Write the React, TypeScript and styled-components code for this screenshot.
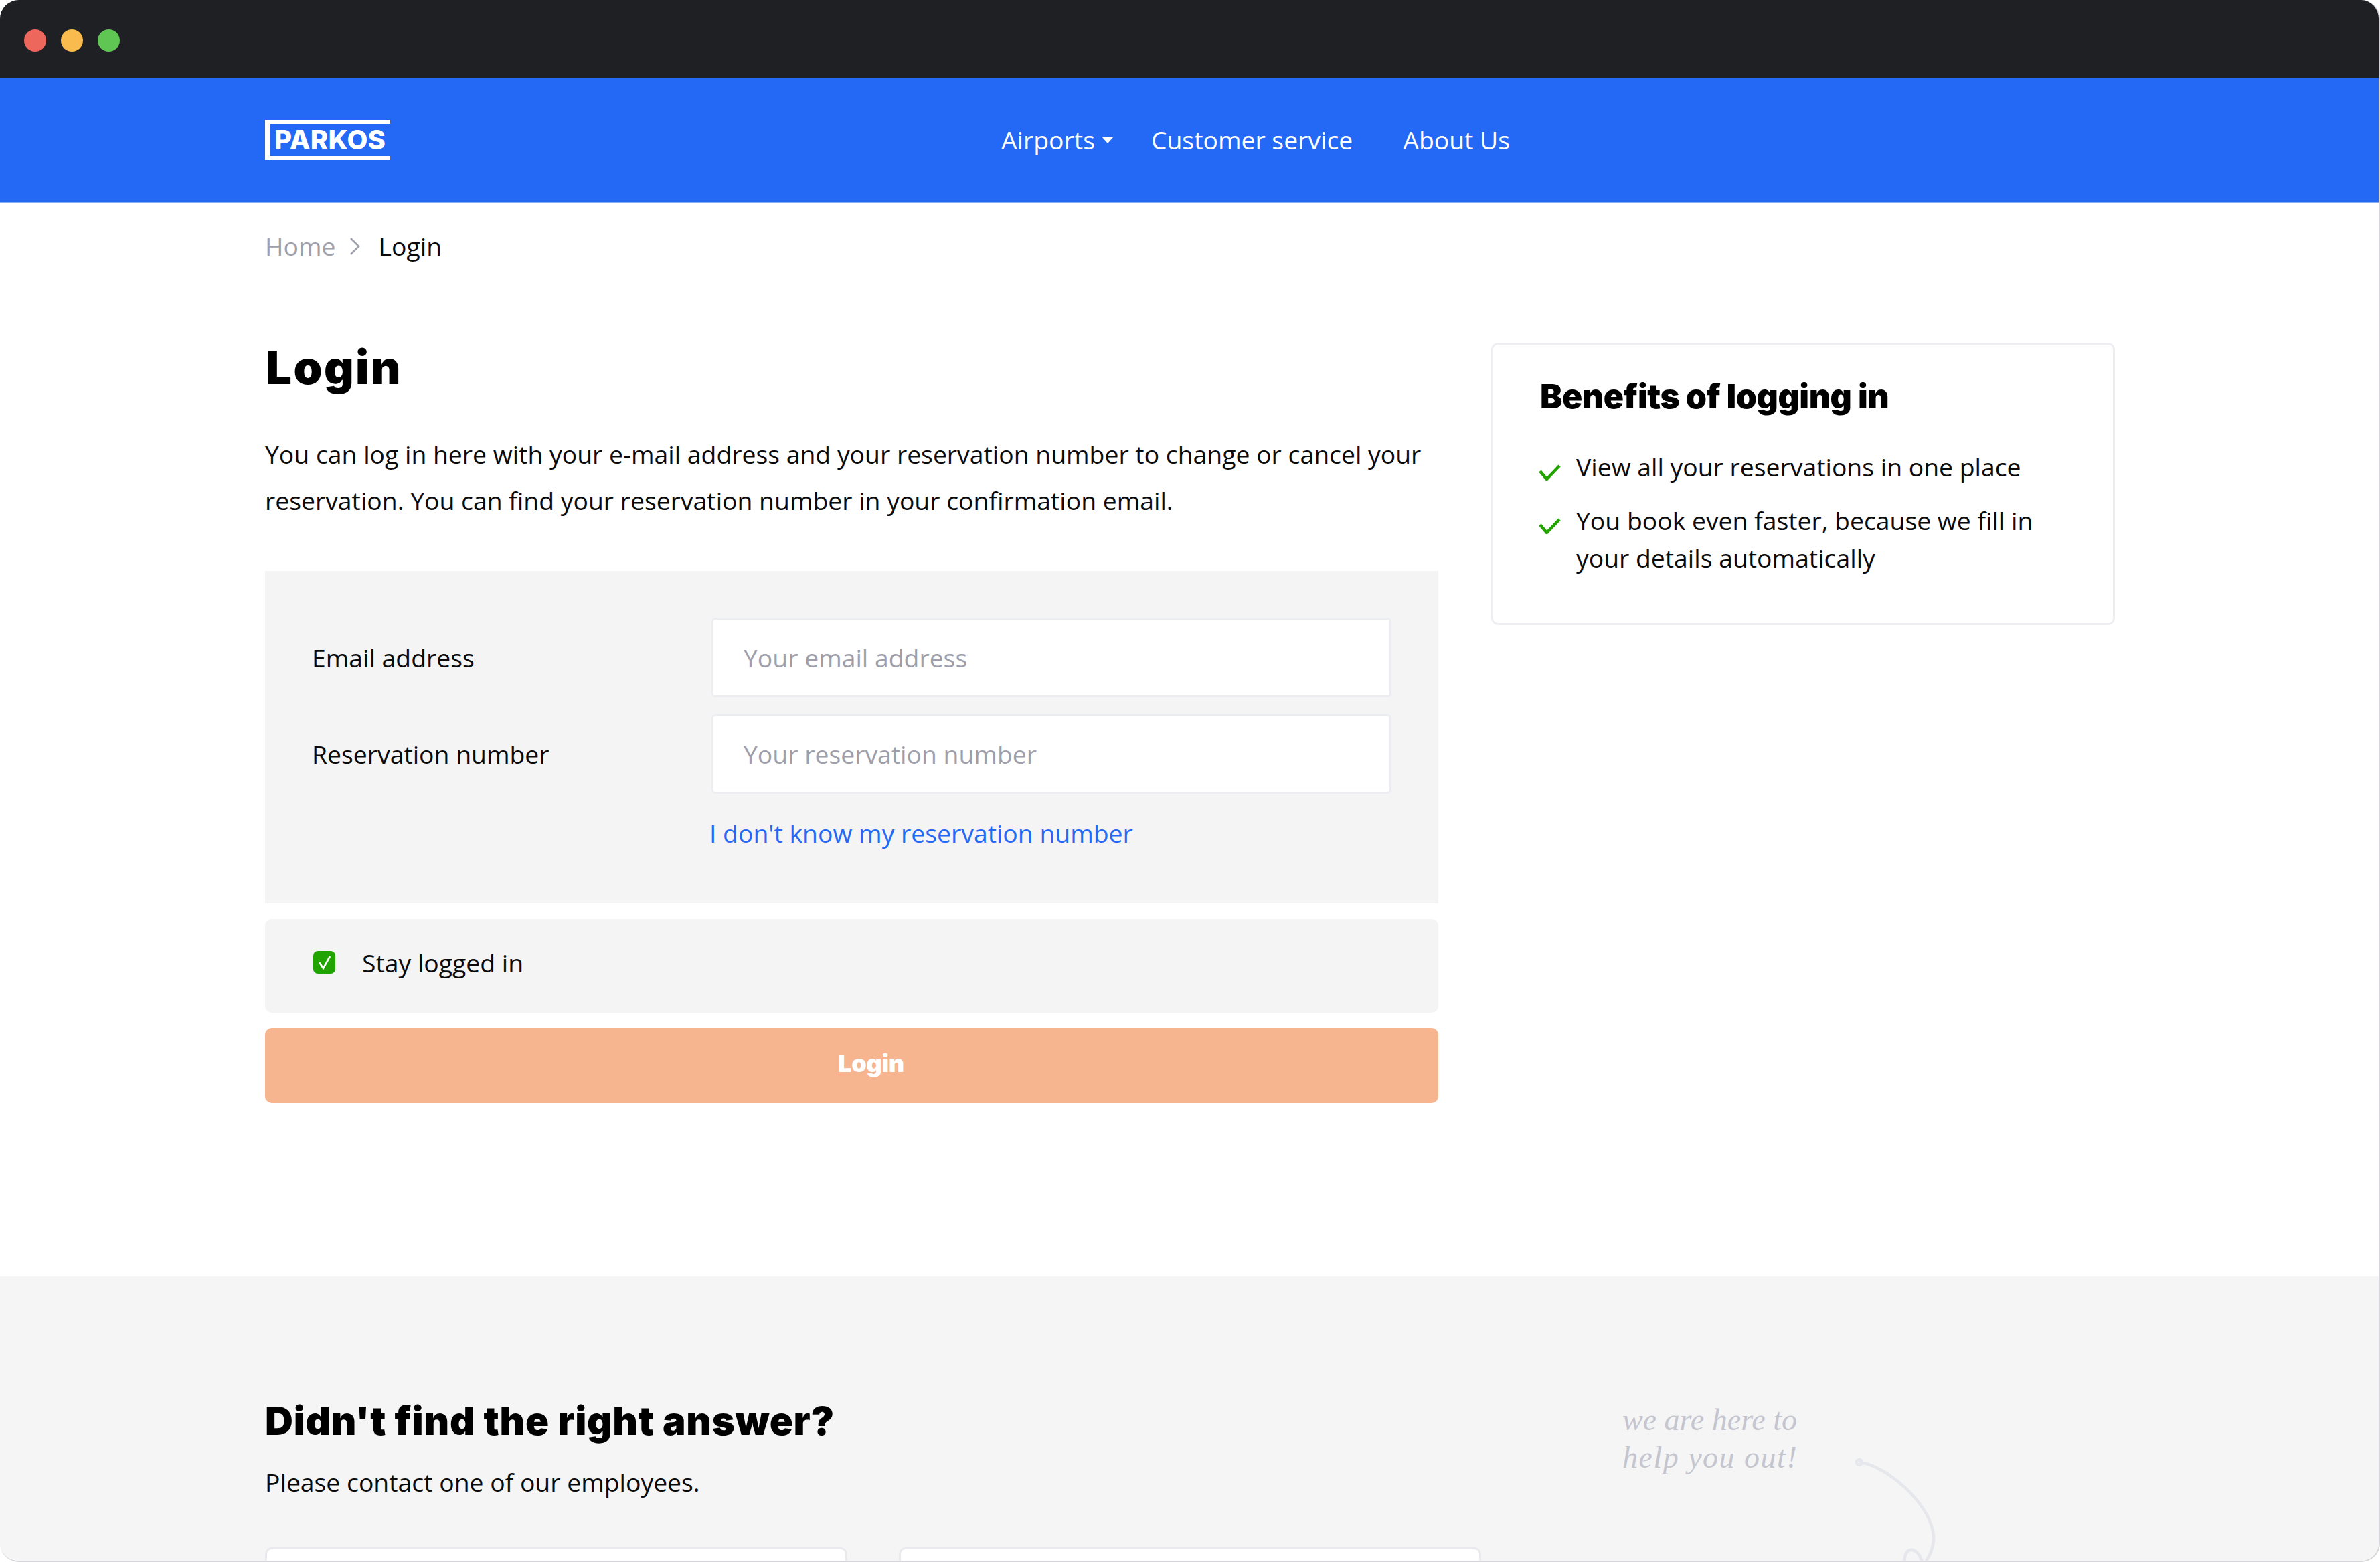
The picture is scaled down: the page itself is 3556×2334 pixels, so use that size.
import React from "react";
import styled, { createGlobalStyle } from "styled-components";

const Global = createGlobalStyle`
  * { box-sizing: border-box; }
  html, body { margin: 0; padding: 0; background: #fff; }
  body { font-family: "Open Sans", "Liberation Sans", sans-serif; color: #0a0a0a; }
`;

const Frame = styled.div`
  position: relative;
  width: 3556px;
  height: 2334px;
  overflow: hidden;
  background: #fff;
  border-radius: 28px;
  border-right: 2px solid #d6d6da;
  border-bottom: 2px solid #d6d6da;
`;

const TitleBar = styled.div`
  height: 116px;
  background: #1f2023;
  display: flex;
  align-items: center;
  gap: 22px;
  padding: 4px 0 0 36px;
`;

const Dot = styled.span<{ $color: string }>`
  width: 33px;
  height: 33px;
  border-radius: 50%;
  background: ${(p) => p.$color};
`;

const Header = styled.header`
  height: 187px;
  background: #2369f6;
  border-bottom: 1px solid #7fb0f7;
  padding-left: 396px;
  display: flex;
  align-items: center;
  color: #fff;
`;

const Logo = styled.div`
  width: 187px;
  height: 60px;
  margin-top: -1px;
  border: solid #fff;
  border-width: 6px 0 6px 7px;
  padding-left: 7px;
  font: 800 40px/48px Inter, "Liberation Sans", sans-serif;
  letter-spacing: 0.2px;
  color: #fff;
  white-space: nowrap;
`;

const Nav = styled.nav`
  display: flex;
  align-items: center;
  margin-left: 913px;
  font-size: 37.33px;
  line-height: 52px;
`;

const NavItem = styled.a<{ $gap?: number }>`
  display: flex;
  align-items: center;
  margin-right: ${(p) => p.$gap ?? 0}px;
  white-space: nowrap;
`;

const Caret = styled.span`
  width: 0;
  height: 0;
  margin-left: 10px;
  border-left: 9px solid transparent;
  border-right: 9px solid transparent;
  border-top: 10px solid #fff;
`;

const Crumbs = styled.div`
  display: flex;
  align-items: center;
  padding: 38px 0 0 396px;
  font-size: 37.33px;
  line-height: 54px;
`;

const CrumbLink = styled.a`
  color: #9ea0ac;
`;

const CrumbIcon = styled.svg`
  width: 16px;
  height: 28px;
  margin: 0 28px 0 20px;
`;

const Content = styled.main`
  display: grid;
  grid-template-columns: 1753px 932px;
  column-gap: 79px;
  align-items: start;
  padding: 117px 0 259px 396px;
`;

const Title = styled.h1`
  margin: 0;
  padding-left: 1px;
  font: 900 69px/74px Inter, "Liberation Sans", sans-serif;
  letter-spacing: 2.4px;
  color: #000;
`;

const Intro = styled.p`
  margin: 58px 0 71px;
  font-size: 37.33px;
  line-height: 69px;
`;

const FormPanel = styled.section`
  background: #f4f4f4;
  padding: 70px 70px 80px 70px;
  display: grid;
  grid-template-columns: 597px 1016px;
  grid-auto-rows: auto;
  row-gap: 25px;
  align-items: center;
  font-size: 37.33px;
`;

const FieldLabel = styled.label`
  line-height: 52px;
`;

const Field = styled.input`
  width: 100%;
  height: 119px;
  padding: 0 45px;
  background: #fff;
  border: 3px solid #ecedf1;
  border-radius: 6px;
  outline: none;
  font: 400 37.33px "Open Sans", sans-serif;
  &::placeholder { color: #9e9fab; opacity: 1; }
`;

const HelpLink = styled.a`
  grid-column: 2;
  margin: 9px 0 0 -3px;
  line-height: 50px;
  color: #2369f6;
`;

const StayPanel = styled.label`
  display: flex;
  align-items: center;
  gap: 40px;
  height: 140px;
  margin-top: 23px;
  padding: 0 0 10px 72px;
  background: #f4f4f4;
  border-radius: 10px;
  font-size: 37.33px;
`;

const CheckBox = styled.span`
  width: 33px;
  height: 34px;
  border-radius: 7px;
  background: #21a400;
  display: flex;
  align-items: center;
  justify-content: center;
`;

const SubmitButton = styled.button`
  display: block;
  width: 100%;
  height: 112px;
  margin-top: 23px;
  padding: 0 0 6px 58px;
  border: 0;
  border-radius: 10px;
  background: #f6b48f;
  color: #fff;
  font: 900 36px Inter, "Liberation Sans", sans-serif;
  letter-spacing: -0.3px;
`;

const BenefitCard = styled.aside`
  height: 422px;
  padding: 47px 70px 0;
  background: #fff;
  border: 3px solid #eeeef2;
  border-radius: 10px;
`;

const CardTitle = styled.h2`
  margin: 0 0 48px;
  font: 900 50px/60px Inter, "Liberation Sans", sans-serif;
  letter-spacing: -0.5px;
  color: #000;
`;

const BenefitList = styled.ul`
  list-style: none;
  margin: 0;
  padding: 0;
  display: flex;
  flex-direction: column;
  gap: 24px;
`;

const BenefitItem = styled.li`
  display: grid;
  grid-template-columns: 33px 1fr;
  column-gap: 21px;
  font-size: 37.33px;
  line-height: 56px;
`;

const Tick = styled.svg`
  width: 33px;
  height: 24px;
  margin: 24px 0 0 -2px;
`;

const Contact = styled.section`
  position: relative;
  height: 427px;
  padding: 178px 0 0 396px;
  background: #f5f5f5;
`;

const ContactTitle = styled.h2`
  margin: 0 0 26px;
  font: 900 58px/76px Inter, "Liberation Sans", sans-serif;
  letter-spacing: 0.75px;
  color: #000;
`;

const ContactText = styled.p`
  margin: 0 0 69px;
  font-size: 37.33px;
  line-height: 56px;
`;

const ContactCards = styled.div`
  display: grid;
  grid-template-columns: 870px 870px;
  column-gap: 77px;
`;

const ContactCard = styled.div`
  height: 200px;
  background: #fff;
  border: 3px solid #e9e9ee;
  border-radius: 10px;
`;

const HandNote = styled.div`
  position: absolute;
  left: 2424px;
  top: 187px;
  font: italic 400 46px/56px "Liberation Serif", serif;
  color: #c4c5cf;
  white-space: nowrap;
`;

const HandLine = styled.div<{ $spacing?: number }>`
  letter-spacing: ${(p) => p.$spacing ?? 0}px;
`;

const HandArrow = styled.svg`
  position: absolute;
  left: 2760px;
  top: 263px;
  width: 150px;
  height: 170px;
`;

export default function App() {
  return (
    <>
      <Global />
      <Frame>
        <TitleBar>
          <Dot $color="#ee675c" />
          <Dot $color="#f9bb4e" />
          <Dot $color="#5fc653" />
        </TitleBar>
        <Header>
          <Logo>PARKOS</Logo>
          <Nav>
            <NavItem $gap={56}>
              Airports
              <Caret />
            </NavItem>
            <NavItem $gap={75}>Customer service</NavItem>
            <NavItem>About Us</NavItem>
          </Nav>
        </Header>
        <Crumbs>
          <CrumbLink>Home</CrumbLink>
          <CrumbIcon viewBox="0 0 16 28" fill="none" stroke="#9ea0ac" strokeWidth="2.6">
            <path d="M2 2l12 12L2 26" />
          </CrumbIcon>
          <span>Login</span>
        </Crumbs>
        <Content>
          <div>
            <Title>Login</Title>
            <Intro>
              You can log in here with your e-mail address and your reservation number to change or cancel your
              reservation. You can find your reservation number in your confirmation email.
            </Intro>
            <FormPanel>
              <FieldLabel>Email address</FieldLabel>
              <Field placeholder="Your email address" />
              <FieldLabel>Reservation number</FieldLabel>
              <Field placeholder="Your reservation number" />
              <HelpLink>I don't know my reservation number</HelpLink>
            </FormPanel>
            <StayPanel>
              <CheckBox>
                <svg width="24" height="26" viewBox="0 0 24 26" fill="none" stroke="#fff" strokeWidth="2.6">
                  <path d="M4 13l6 9L20 4" />
                </svg>
              </CheckBox>
              Stay logged in
            </StayPanel>
            <SubmitButton>Login</SubmitButton>
          </div>
          <BenefitCard>
            <CardTitle>Benefits of logging in</CardTitle>
            <BenefitList>
              <BenefitItem>
                <Tick viewBox="0 0 33 24" fill="none" stroke="#21a400" strokeWidth="4.5">
                  <path d="M2 10l10 12L31 2" />
                </Tick>
                <span>View all your reservations in one place</span>
              </BenefitItem>
              <BenefitItem>
                <Tick viewBox="0 0 33 24" fill="none" stroke="#21a400" strokeWidth="4.5">
                  <path d="M2 10l10 12L31 2" />
                </Tick>
                <span>
                  You book even faster, because we fill in
                  <br />
                  your details automatically
                </span>
              </BenefitItem>
            </BenefitList>
          </BenefitCard>
        </Content>
        <Contact>
          <ContactTitle>Didn't find the right answer?</ContactTitle>
          <ContactText>Please contact one of our employees.</ContactText>
          <ContactCards>
            <ContactCard />
            <ContactCard />
          </ContactCards>
          <HandNote>
            <HandLine>we are here to</HandLine>
            <HandLine $spacing={1.5}>help you out!</HandLine>
          </HandNote>
          <HandArrow viewBox="0 0 150 170" fill="none" stroke="#e6e7ec" strokeWidth="4.5">
            <path d="M18 15C55 18 125 75 129 125C130 145 120 160 113 170" />
            <path d="M113 170C110 150 100 145 94 146C86 148 84 160 87 172" />
            <circle cx="18" cy="15" r="4" />
          </HandArrow>
        </Contact>
      </Frame>
    </>
  );
}
